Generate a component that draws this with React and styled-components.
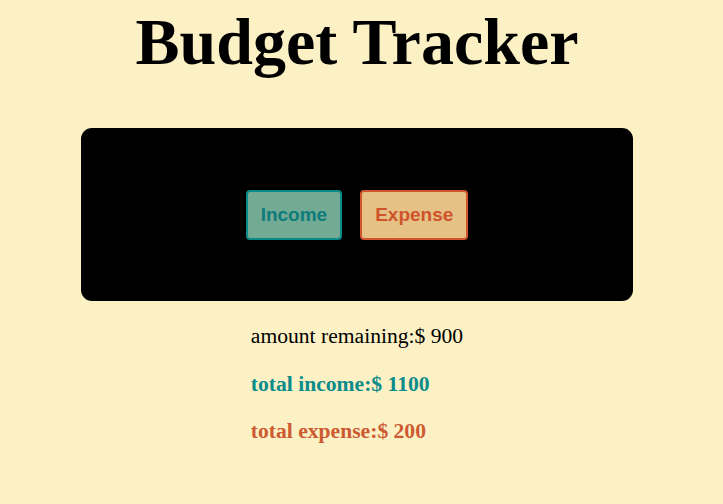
import React from "react";
import styled, { createGlobalStyle } from "styled-components";

const Global = createGlobalStyle`
  html, body { margin: 0; padding: 0; background: #fbf1c5; }
  body { font-family: "Liberation Serif", "Times New Roman", serif; color: #000; }
`;

const Page = styled.div`
  display: flex;
  flex-direction: column;
  align-items: center;
  padding-right: 9px;
  min-height: 504px;
  box-sizing: border-box;
`;

const Title = styled.h1`
  margin: 6px 0 0;
  font-size: 66px;
  line-height: 72px;
  font-weight: 700;
`;

const Panel = styled.div`
  margin-top: 50px;
  width: 552px;
  height: 173px;
  background: #000;
  border-radius: 11px;
  display: flex;
  align-items: center;
  justify-content: center;
  gap: 18px;
`;

const Button = styled.button`
  height: 50px;
  padding: 0 13px;
  border-radius: 4px;
  border: 2px solid ${(p) => p.$border};
  background: ${(p) => p.$bg};
  color: ${(p) => p.$fg};
  font-family: "Liberation Sans", Arial, sans-serif;
  font-weight: 700;
  font-size: 19px;
  cursor: pointer;
`;

const Stats = styled.div`
  margin-top: 23px;
  display: flex;
  flex-direction: column;
  gap: 23.5px;
  align-items: flex-start;
`;

const Stat = styled.div`
  font-size: 21.6px;
  line-height: 24px;
  font-weight: ${(p) => (p.$bold ? 700 : 400)};
  color: ${(p) => p.$color || "#000"};
`;

export default function App() {
  return (
    <>
      <Global />
      <Page>
        <Title>Budget Tracker</Title>
        <Panel>
          <Button $bg="#73aa94" $border="#0b8a8a" $fg="#0e7b7b">Income</Button>
          <Button $bg="#e6c185" $border="#d0552c" $fg="#cf542c">Expense</Button>
        </Panel>
        <Stats>
          <Stat>amount remaining:$ 900</Stat>
          <Stat $bold $color="#0b8b8b">total income:$ 1100</Stat>
          <Stat $bold $color="#cd5a31">total expense:$ 200</Stat>
        </Stats>
      </Page>
    </>
  );
}
